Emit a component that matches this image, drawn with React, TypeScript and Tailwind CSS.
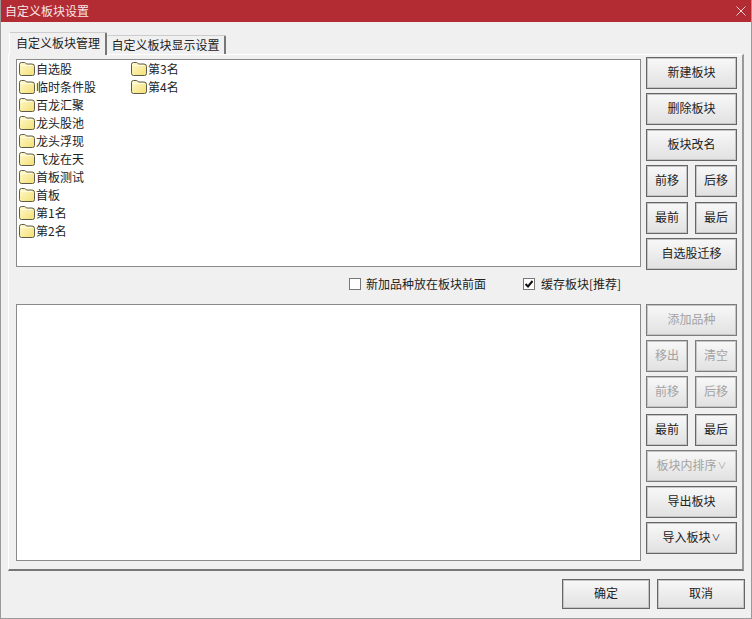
const FONT = "font-['Noto_Sans_CJK_SC','Liberation_Sans',sans-serif]";

const LEFT_ITEMS = ["自选股", "临时条件股", "百龙汇聚", "龙头股池", "龙头浮现", "飞龙在天", "首板测试", "首板", "第1名", "第2名", "第3名", "第4名"];

function FolderIcon() {
  return (
    <svg width="16" height="14" viewBox="0 0 16 14" className="shrink-0" aria-hidden="true">
      <defs>
        <linearGradient id="folderFill" x1="0" y1="0" x2="1" y2="1">
          <stop offset="0" stopColor="#fffad0" />
          <stop offset="1" stopColor="#f4df72" />
        </linearGradient>
      </defs>
      <path d="M0.5 11.5V2.5Q0.5 0.5 2.5 0.5H5.5Q6.5 0.5 7.5 2H13Q15.5 2 15.5 4.5V11.5Q15.5 13.5 13.5 13.5H2.5Q0.5 13.5 0.5 11.5Z" fill="url(#folderFill)" stroke="#5c5a48" />
      <path d="M2 3.5H13.5" stroke="#fffbe6" />
    </svg>
  );
}

function Btn({ label, wide = true, disabled = false, className = "" }: { label: React.ReactNode; wide?: boolean; disabled?: boolean; className?: string }) {
  return (
    <button
      type="button"
      className={`${wide ? "w-[91px]" : "w-[42px]"} flex h-[32px] items-center justify-center border pb-[2px] shadow-[inset_0_0_0_1px_#c4c4c4] bg-gradient-to-b from-[#f8f8f8] to-[#e1e1e1] text-[12px] ${
        disabled ? "border-[#7c7c7c] text-[#a3a3a3]" : "border-[#666] text-[#222]"
      } ${className}`}
    >
      {label}
    </button>
  );
}

function BtnPair({ a, b, disabled = false, className = "" }: { a: string; b: string; disabled?: boolean; className?: string }) {
  return (
    <div className={`flex w-[91px] justify-between ${className}`}>
      <Btn label={a} wide={false} disabled={disabled} />
      <Btn label={b} wide={false} disabled={disabled} />
    </div>
  );
}

function Caret() {
  return <span className="ml-px text-[9px] leading-none">∨</span>;
}

export default function App() {
  return (
    <div className={`${FONT} flex h-[619px] w-[752px] flex-col overflow-hidden border-x border-b border-[#9a9a9a] bg-[#f0f0f0] text-[12px] text-[#222]`}>
      <div className="-mx-px flex h-[22px] shrink-0 items-center justify-between bg-[#b32c33] pl-[5px] pr-[6px] text-[#f6e6e6]">
        <span className="leading-none">自定义板块设置</span>
        <svg width="10" height="10" viewBox="0 0 10 10" aria-hidden="true">
          <path d="M0.5 0.5L9.5 9.5M9.5 0.5L0.5 9.5" stroke="#f0d5d5" strokeWidth="1" />
        </svg>
      </div>

      <div className="flex h-[32px] shrink-0 items-end pl-[8px] pt-[10px]">
        <div className="z-10 -mb-px flex h-[23px] w-[98px] items-center justify-center rounded-t-[2px] border-l border-r-2 border-t border-l-white border-r-[#777] border-t-[#ccc] bg-[#f0f0f0] pb-[2px] pl-px">
          自定义板块管理
        </div>
        <div className="flex h-[19px] w-[119px] items-center justify-center rounded-t-[2px] border-r-2 border-t border-r-[#777] border-t-[#ccc] bg-[#f0f0f0]">
          自定义板块显示设置
        </div>
      </div>

      <div className="ml-[7px] flex h-[517px] w-[736px] shrink-0 flex-col border-b-2 border-l border-r-2 border-t border-b-[#777] border-l-white border-r-[#999] border-t-white pl-[7px] pt-[2px]">
        <div className="flex gap-[5px]">
          <div className="mt-[2px] grid h-[208px] w-[625px] auto-cols-[112px] grid-flow-col grid-rows-[repeat(10,18px)] border border-[#8a8a8a] bg-white pl-[2px]">
            {LEFT_ITEMS.map((item) => (
              <div key={item} className="flex items-center gap-px">
                <FolderIcon />
                <span>{item}</span>
              </div>
            ))}
          </div>
          <div className="flex flex-col">
            <Btn label="新建板块" />
            <Btn label="删除板块" className="mt-[4px]" />
            <Btn label="板块改名" className="mt-[4px]" />
            <BtnPair a="前移" b="后移" className="mt-[4px]" />
            <BtnPair a="最前" b="最后" className="mt-[5px]" />
            <Btn label="自选股迁移" className="mt-[4px]" />
          </div>
        </div>

        <div className="flex h-[34px] items-center pb-[6px] pl-[333px]">
          <span className="h-[12px] w-[12px] border border-[#777] bg-white" />
          <span className="ml-[5px]">新加品种放在板块前面</span>
          <span className="ml-[37px] flex h-[12px] w-[12px] items-center justify-center border border-[#777] bg-white">
            <svg width="10" height="10" viewBox="0 0 10 10" aria-hidden="true">
              <path d="M1.5 5L4 7.5L8.5 2" fill="none" stroke="#111" strokeWidth="2" />
            </svg>
          </span>
          <span className="ml-[6px]">缓存板块[推荐]</span>
        </div>

        <div className="flex gap-[5px]">
          <div className="h-[257px] w-[625px] border border-[#8a8a8a] bg-white" />
          <div className="flex flex-col">
            <Btn label="添加品种" disabled />
            <BtnPair a="移出" b="清空" disabled className="mt-[4px]" />
            <BtnPair a="前移" b="后移" disabled className="mt-[4px]" />
            <BtnPair a="最前" b="最后" className="mt-[6px]" />
            <Btn label={<>板块内排序<Caret /></>} disabled className="mt-[4px]" />
            <Btn label="导出板块" className="mt-[4px]" />
            <Btn label={<>导入板块<Caret /></>} className="mt-[4px]" />
          </div>
        </div>
      </div>

      <div className="flex justify-end gap-[7px] pr-[6px] pt-[8px]">
        <Btn label="确定" wide={false} className="!h-[30px] !w-[88px]" />
        <Btn label="取消" wide={false} className="!h-[30px] !w-[88px]" />
      </div>
    </div>
  );
}
